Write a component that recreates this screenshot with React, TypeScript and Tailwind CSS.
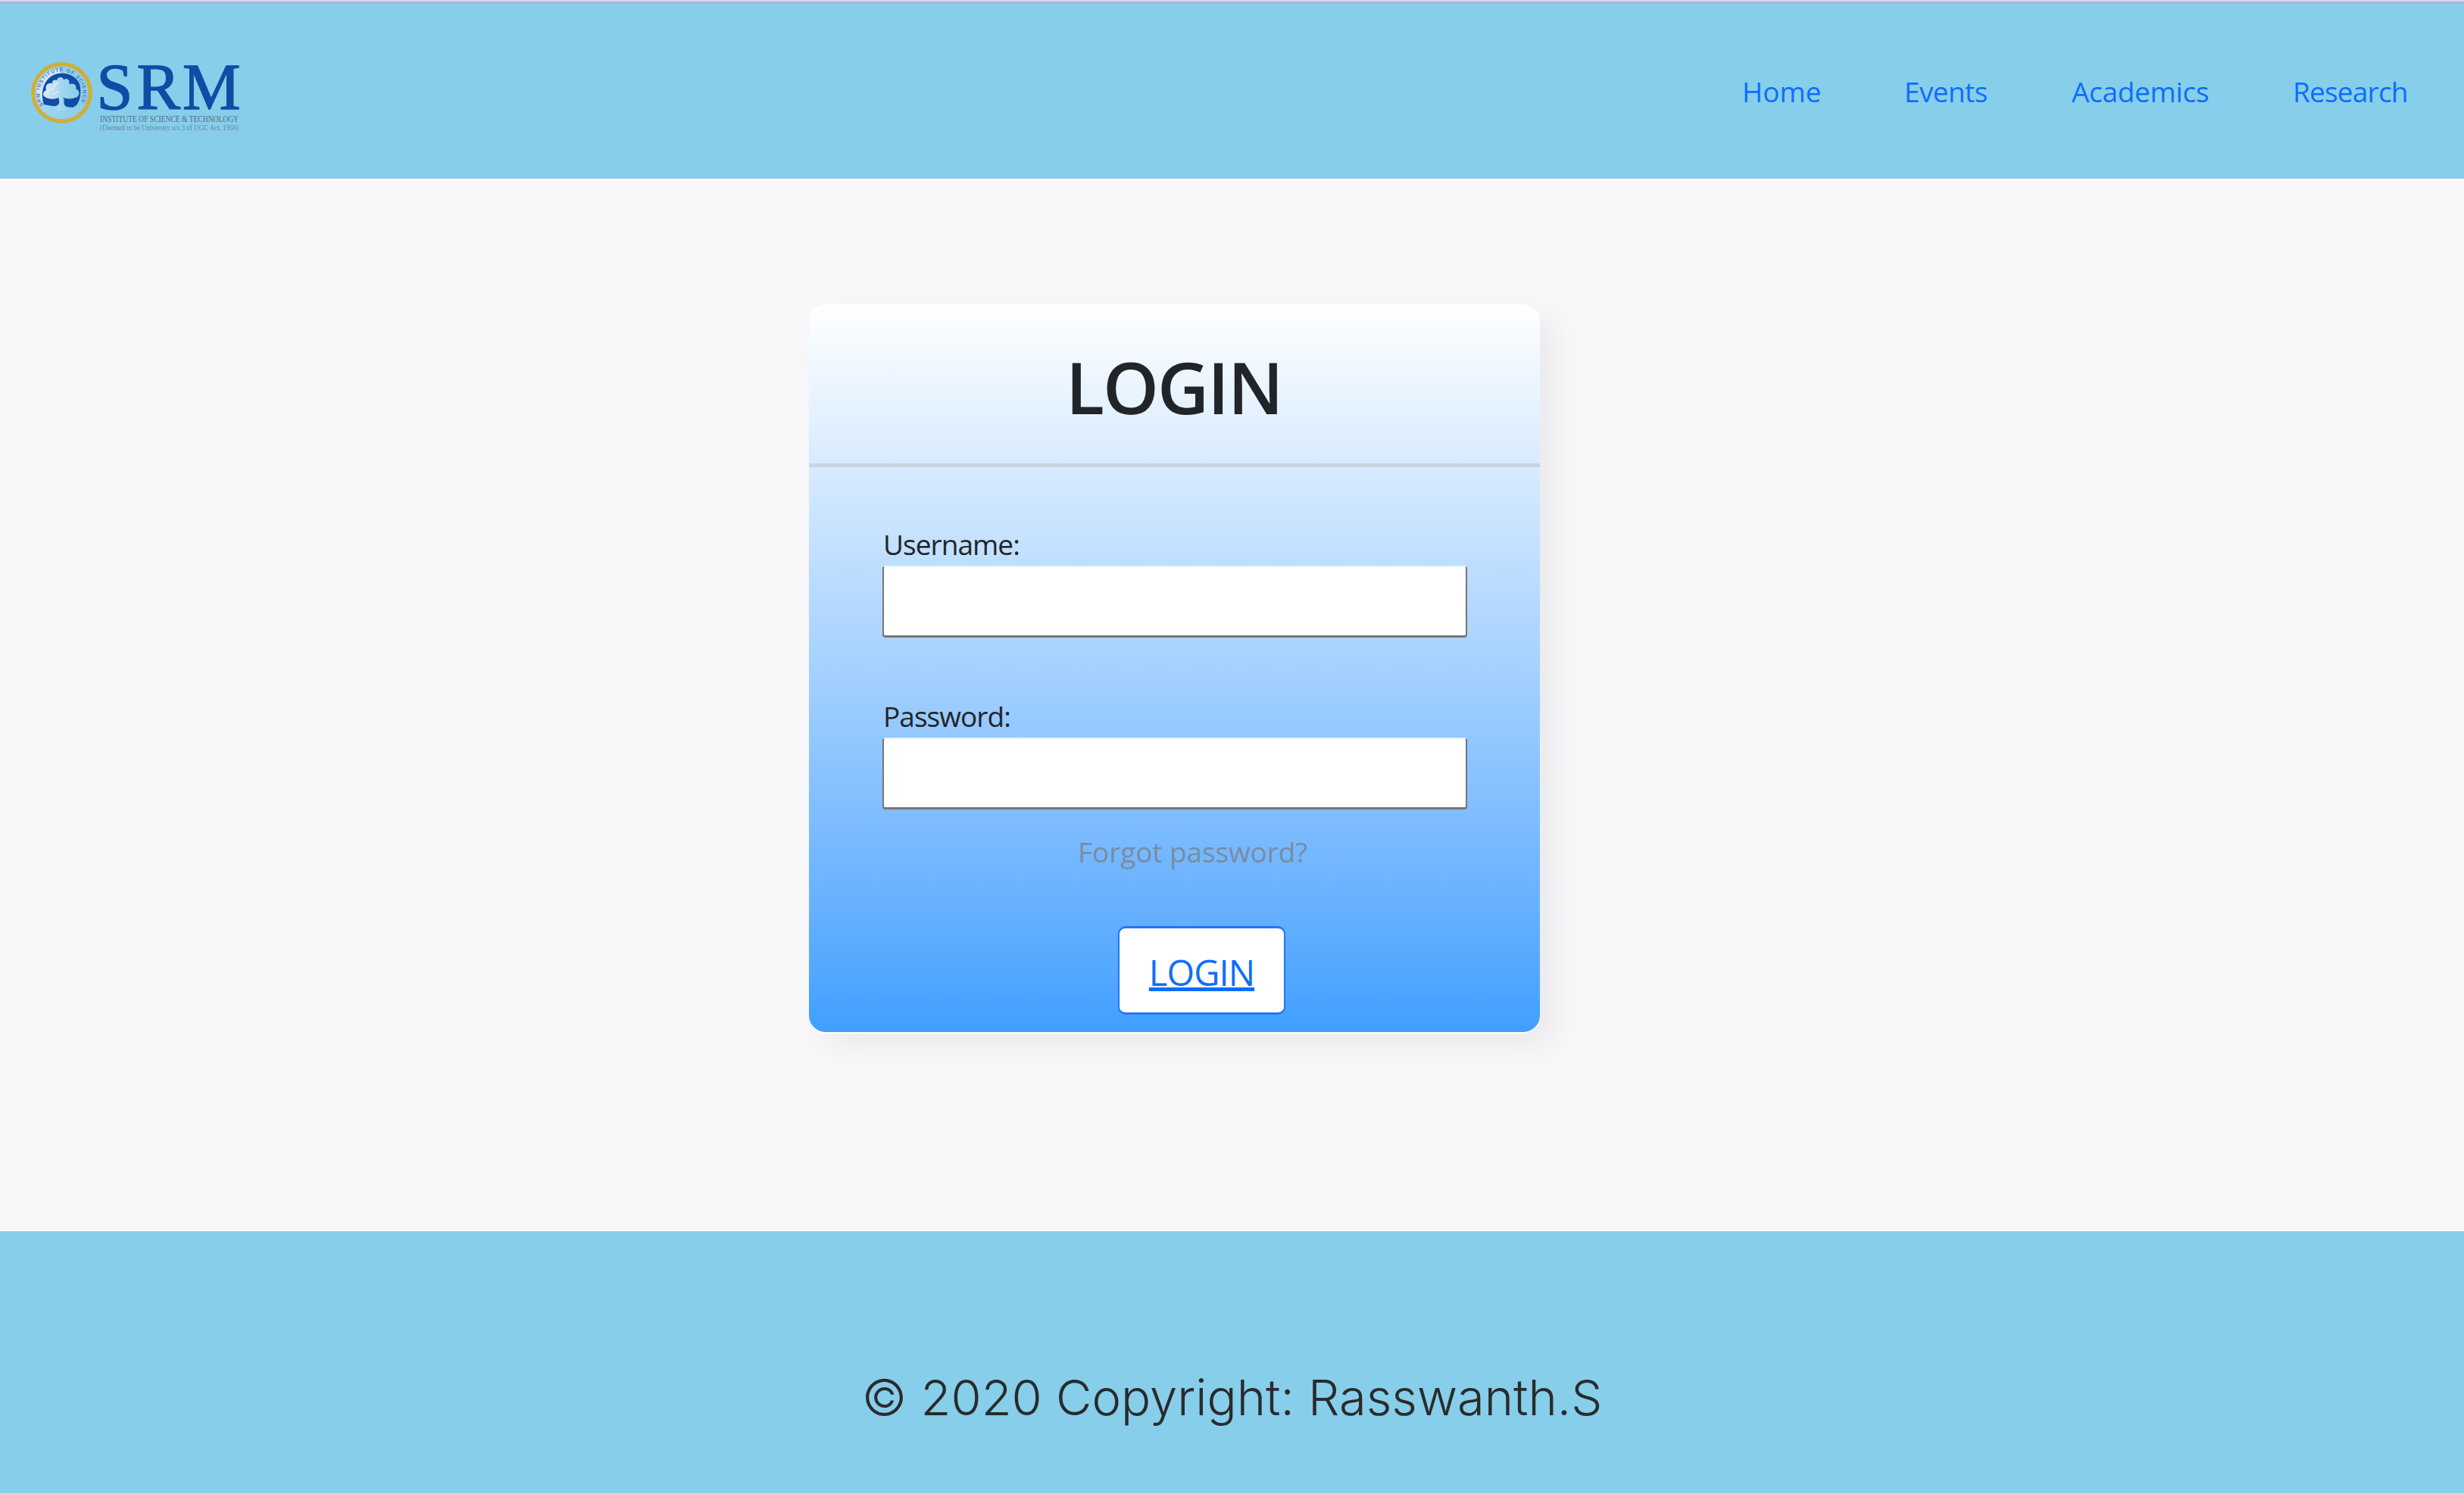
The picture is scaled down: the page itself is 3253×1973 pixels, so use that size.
function Logo() {
  return (
    <svg className="block h-[110px] w-[330px]" viewBox="0 65 330 110" role="img" aria-label="SRM">
      <defs>
        <path id="seal-ring" d="M57.5 139 A28.5 28.5 0 1 1 104.5 139" />
        <linearGradient id="seal-fill" x1="0" x2="1" y1="0" y2="0">
          <stop offset="0" stopColor="#dde8f8" />
          <stop offset="0.5" stopColor="#a5d5ee" />
          <stop offset="1" stopColor="#87ceea" />
        </linearGradient>
      </defs>
      <circle cx="81.5" cy="122.5" r="37.7" fill="url(#seal-fill)" fillOpacity="0.4" stroke="#c9b050" strokeWidth="5.5" />
      <circle cx="81.5" cy="122.5" r="37.7" fill="none" stroke="#d3ae2a" strokeWidth="2.5" />
      <path d="M55 134 A29 29 0 0 1 79 93.500" fill="none" stroke="#e8eefb" strokeWidth="6" opacity="0.75" />
      <text fontFamily="Liberation Sans" fontSize="6.500" fontWeight="700" fill="#5277bd">
        <textPath href="#seal-ring" textLength="118">SRM INSTITUTE OF SCIENCE</textPath>
      </text>
      {/* blue disc behind the tree */}
      <path d="M58 138 C53 124 57 105 71 99 C84 93 101 99 105 111 C108 121 106 133 101 139 L96 142 L88 141 C84 139 84 134 85 131 L78 130 C80 137 76 141 69 140 Z" fill="#0d4da6" />
      <path d="M58 127 C56 124 57 121 61 119 C59 112 64 109 69 110 C69 105 73 105 75 106 C76 101 83 101 84 105 C89 103 93 106 91 111 C98 109 102 113 100 117 C105 119 106 125 102 128 C96 131 88 131 84 129 C81 133 83 140 87 146 L74 146 C78 141 80 135 77 129 C71 132 62 131 58 127 Z" fill="url(#seal-fill)" />
      <path d="M62 123 q4 -7 9 -5 q0 -8 7 -9 M70 125 q4 -4 8 -3" fill="none" stroke="#e9eefb" strokeWidth="2" opacity="0.7" />
      <text x="127.500 180.500 241" y="143.700" fontFamily="Liberation Serif" fontSize="86" fill="#0d4da6" stroke="#0d4da6" strokeWidth="1.4">SRM</text>
      <text x="132" y="161" fontFamily="Liberation Serif" fontSize="11.500" fill="#4e6f80" textLength="183" lengthAdjust="spacingAndGlyphs">INSTITUTE OF SCIENCE &amp; TECHNOLOGY</text>
      <text x="132" y="171.500" fontFamily="Liberation Serif" fontSize="9.500" fill="#668b9c" textLength="183" lengthAdjust="spacingAndGlyphs">(Deemed to be University u/s 3 of UGC Act, 1956)</text>
    </svg>
  );
}

const inputClass =
  "block h-[95px] w-[772px] rounded-[4px] border-2 border-b-[3px] border-[#767676] border-t-[#e6f1fd] bg-white px-3 outline-none";

export default function App() {
  return (
    <div className="flex h-[1973px] w-[3253px] flex-col overflow-hidden bg-[#f8f8fb] font-['Open_Sans',sans-serif] text-[37px] leading-[56px] text-[#212529]">
      <header className="flex h-[236px] shrink-0 justify-between border-t-2 border-[#cddaf6] bg-[#87ceea]">
        <div className="flex w-full justify-between border-t-[3px] border-[#a5b4d3] pt-[60px]">
          <Logo />
          <nav className="flex pt-[28px] pr-[73px] text-[#0d6efd]">
            <a className="w-[214px]">Home</a>
            <a className="w-[221px] tracking-[-0.6px]">Events</a>
            <a className="w-[292px] tracking-[-0.3px]">Academics</a>
            <a className="w-[153px] tracking-[-0.8px]">Research</a>
          </nav>
        </div>
      </header>

      <main className="flex h-[1390px] shrink-0 items-start pt-[166px] pl-[1068px]">
        <section className="flex h-[961px] w-[965px] flex-col rounded-[22px] bg-linear-to-b from-white to-[#409fff] shadow-[0_2px_0_#ffffff,20px_18px_40px_rgba(0,0,0,0.06)]">
          <h1 className="h-[215px] border-b-[5px] border-[#cbd5df] pt-[53px] pl-[339px] text-[94px] leading-[112px] font-semibold tracking-[-2px]">
            LOGIN
          </h1>
          <form className="flex flex-col items-start pt-[74px] pl-[97px]">
            <label className="pl-px tracking-[-0.95px]" htmlFor="username">Username:</label>
            <input id="username" type="text" className={inputClass} />
            <label className="mt-[76px] pl-px tracking-[-0.95px]" htmlFor="password">Password:</label>
            <input id="password" type="password" className={inputClass} />
            <a className="mt-[28px] ml-[258px] tracking-[-0.1px] text-[#768da5]">Forgot password?</a>
            <button
              type="button"
              className="mt-[70px] ml-[311px] flex h-[117px] w-[221px] justify-center rounded-[10px] border-2 border-y-[3px] border-[#2474fb] bg-white pt-[23px] text-[47px] leading-[70px] tracking-[-0.9px] text-[#0d6efd]"
            >
              <span className="underline decoration-[5px] underline-offset-[2px] [text-decoration-skip-ink:none]">LOGIN</span>
            </button>
          </form>
        </section>
      </main>

      <footer className="flex h-[347px] shrink-0 justify-center border-b border-[#c3e4f4] bg-[#87ceea] pt-[180px] font-['Inter',sans-serif] text-[65.1px] leading-[80px] font-light text-[#292b2c]">
        <p>© 2020 Copyright: Rasswanth.S</p>
      </footer>
    </div>
  );
}
